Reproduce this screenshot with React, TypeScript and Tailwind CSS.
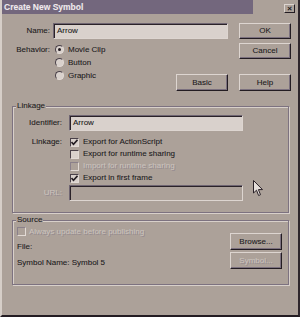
import React from 'react';

const btn =
  'flex items-center justify-center w-[52px] border-t border-l border-t-[#ddd5d0] border-l-[#ddd5d0] border-b border-r border-b-[#231c22] border-r-[#231c22] shadow-[inset_-1px_-1px_0_#7b707e] bg-[#aca199]';
const field =
  'h-[16px] border-t border-l border-t-[#6f6572] border-l-[#6f6572] border-b border-r border-b-[#ddd5d0] border-r-[#ddd5d0] shadow-[inset_1px_1px_0_#2a2228] flex items-center pl-[3px]';
const disabledText = 'text-[#cbc3bd] [text-shadow:1px_1px_0_#93898f]';

function Radio({ checked }: { checked?: boolean }) {
  return (
    <span className="relative w-[9px] h-[9px] rounded-full bg-[#d9d1cc] border border-t-[#4a4149] border-l-[#4a4149] border-b-[#e2dad5] border-r-[#e2dad5] flex items-center justify-center">
      {checked && <span className="w-[3px] h-[3px] rounded-full bg-[#231c22]" />}
    </span>
  );
}

function Check({ checked, disabled }: { checked?: boolean; disabled?: boolean }) {
  return (
    <span
      className={`w-[9px] h-[9px] border border-t-[#4a4149] border-l-[#4a4149] border-b-[#e2dad5] border-r-[#e2dad5] flex items-center justify-center ${
        disabled ? 'bg-[#aca199] border-t-[#8a808a] border-l-[#8a808a]' : 'bg-[#d9d1cc]'
      }`}
    >
      {checked && (
        <svg width="7" height="7" viewBox="0 0 7 7">
          <polyline points="0.5,3 2.5,5.2 6.5,0.8" fill="none" stroke="#231c22" strokeWidth="1.6" />
        </svg>
      )}
    </span>
  );
}

function Group({ label, className, children }: { label: string; className?: string; children: React.ReactNode }) {
  return (
    <div className={`relative ml-[10px] w-[277px] border border-[#7d7280] shadow-[inset_1px_1px_0_#d8d0ca,1px_1px_0_#d8d0ca] ${className ?? ''}`}>
      <span className="absolute -top-[6px] left-[3px] bg-[#aca199] px-[1px] leading-[10px]">{label}</span>
      {children}
    </div>
  );
}

export default function App() {
  return (
    <div className="relative w-[300px] h-[317px] bg-[#aca199] overflow-hidden border-l-2 border-l-[#d6cec8] border-r-2 border-r-[#2e262c] border-b-2 border-b-[#231c22] font-['Liberation_Sans',Arial,sans-serif] text-[8px] text-[#201a20] leading-none [-webkit-text-stroke:0.08px]">
      {/* title bar */}
      <div className="flex items-start h-[15px]">
        <div className="w-[251px] h-[14px] bg-[#73677d] flex items-center pl-[2px] text-[8.5px] font-bold text-[#f0eaee]">
          Create New Symbol
        </div>
        <div className="ml-auto mr-[3px] mt-[4px] w-[11px] h-[9px] border-t border-l border-t-[#ddd5d0] border-l-[#ddd5d0] border-b border-r border-b-[#231c22] border-r-[#231c22] flex items-center justify-center text-[8px] font-bold">
          ×
        </div>
      </div>

      {/* name / behavior */}
      <div className="flex pt-[8px]">
        <div className="w-[226px] flex flex-col">
          <div className="flex items-center h-[15px]">
            <span className="w-[48px] text-right">Name:</span>
            <div className={`${field} ml-[3px] flex-1 h-[15px] bg-[#d9d1cc]`}>Arrow</div>
          </div>
          <div className="flex mt-[5px]">
            <span className="w-[48px] text-right h-[13px] flex items-center justify-end">Behavior:</span>
            <div className="flex flex-col ml-[5px]">
              {[
                ['Movie Clip', true],
                ['Button', false],
                ['Graphic', false],
              ].map(([t, c]) => (
                <div key={t as string} className="flex items-center h-[13px]">
                  <Radio checked={c as boolean} />
                  <span className="ml-[4px]">{t}</span>
                </div>
              ))}
            </div>
            <div className={`${btn} h-[17px] ml-auto mt-[31px]`}>Basic</div>
          </div>
        </div>
        <div className="ml-[11px] flex flex-col">
          <div className={`${btn} h-[16px]`}>OK</div>
          <div className={`${btn} h-[16px] mt-[4px]`}>Cancel</div>
          <div className={`${btn} h-[17px] mt-[15px]`}>Help</div>
        </div>
      </div>

      {/* linkage */}
      <Group label="Linkage" className="mt-[15px] h-[107px]">
        <div className="flex items-center mt-[8px]">
          <span className="w-[49px] text-right">Identifier:</span>
          <div className={`${field} ml-[7px] w-[174px] bg-[#d9d1cc]`}>Arrow</div>
        </div>
        <div className="flex mt-[5px]">
          <span className="w-[49px] text-right h-[12px] flex items-center justify-end">Linkage:</span>
          <div className="flex flex-col ml-[8px]">
            <div className="flex items-center h-[12px]">
              <Check checked />
              <span className="ml-[4px]">Export for ActionScript</span>
            </div>
            <div className="flex items-center h-[12px]">
              <Check />
              <span className="ml-[4px]">Export for runtime sharing</span>
            </div>
            <div className="flex items-center h-[12px]">
              <Check disabled />
              <span className={`ml-[4px] ${disabledText}`}>Import for runtime sharing</span>
            </div>
            <div className="flex items-center h-[12px]">
              <Check checked />
              <span className="ml-[4px]">Export in first frame</span>
            </div>
          </div>
        </div>
        <div className="flex items-center mt-[1px]">
          <span className={`w-[49px] text-right ${disabledText}`}>URL:</span>
          <div className={`${field} ml-[7px] w-[174px] bg-[#aca199]`} />
        </div>
      </Group>

      {/* source */}
      <Group label="Source" className="mt-[7px] h-[65px]">
        <div className="flex">
          <div className="flex flex-col pl-[4px] pt-[6px]">
            <div className="flex items-center h-[9px]">
              <Check disabled />
              <span className={`ml-[3px] ${disabledText}`}>Always update before publishing</span>
            </div>
            <div className="h-[12px] mt-[5px] flex items-center">File:</div>
            <div className="h-[12px] mt-[4px] flex items-center">Symbol Name: Symbol 5</div>
          </div>
          <div className="ml-auto mr-[6px] mt-[12px] flex flex-col">
            <div className={`${btn} h-[17px]`}>Browse...</div>
            <div className={`${btn} h-[17px] mt-[2px] ${disabledText}`}>Symbol...</div>
          </div>
        </div>
      </Group>

      {/* mouse cursor */}
      <svg className="absolute left-[251px] top-[180px]" width="11" height="17" viewBox="0 0 11 17">
        <path d="M0.5,0.5 L0.5,13 L3.5,10.2 L5.6,15.5 L7.5,14.7 L5.4,9.6 L9.5,9.6 Z" fill="#e6dfdb" stroke="#2a2228" strokeWidth="1" />
      </svg>
    </div>
  );
}
